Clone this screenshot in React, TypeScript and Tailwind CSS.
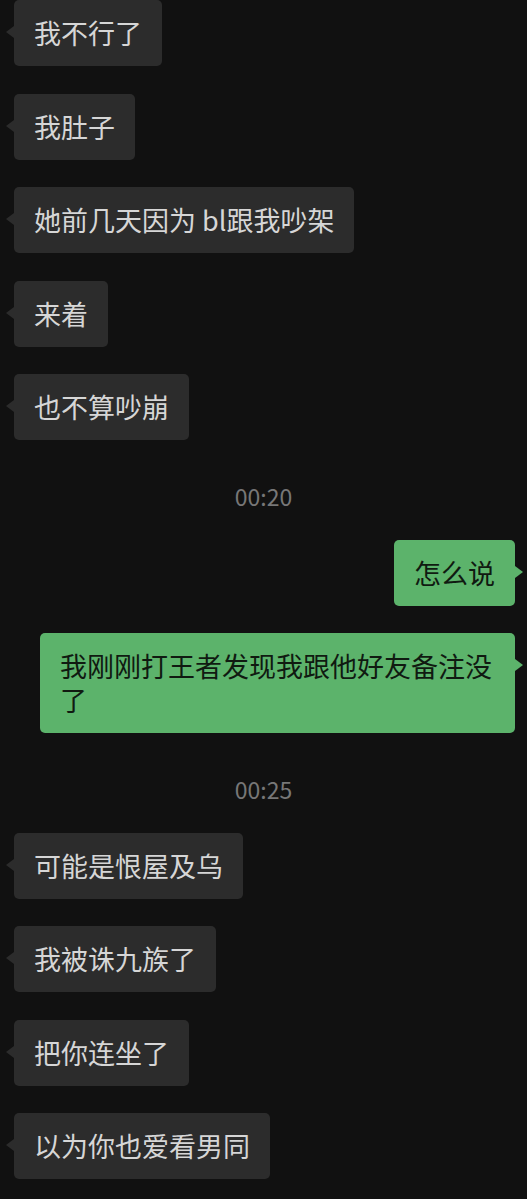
import React from "react";

type Msg =
  | { kind: "time"; text: string }
  | { kind: "in" | "out"; text: string };

const messages: Msg[] = [
  { kind: "in", text: "我不行了" },
  { kind: "in", text: "我肚子" },
  { kind: "in", text: "她前几天因为 bl跟我吵架" },
  { kind: "in", text: "来着" },
  { kind: "in", text: "也不算吵崩" },
  { kind: "time", text: "00:20" },
  { kind: "out", text: "怎么说" },
  { kind: "out", text: "我刚刚打王者发现我跟他好友备注没了" },
  { kind: "time", text: "00:25" },
  { kind: "in", text: "可能是恨屋及乌" },
  { kind: "in", text: "我被诛九族了" },
  { kind: "in", text: "把你连坐了" },
  { kind: "in", text: "以为你也爱看男同" },
];

const Bubble: React.FC<{ text: string; mine: boolean }> = ({ text, mine }) => (
  <div className={mine ? "flex justify-end pr-[12px]" : "flex justify-start pl-[14px]"}>
    <div
      className={
        mine
          ? "relative max-w-[475px] rounded-[5px] bg-[#5cb36b] px-[20px] py-[16px] text-[27px] leading-[34px] text-[#101a11]"
          : "relative max-w-[475px] rounded-[5px] bg-[#2c2c2c] px-[20px] py-[16px] text-[27px] leading-[34px] text-[#d6d6d6]"
      }
    >
      {/* tail */}
      {mine ? (
        <span className="absolute right-[-8px] top-[26px] h-0 w-0 border-y-[6px] border-l-[8px] border-y-transparent border-l-[#5cb36b]" />
      ) : (
        <span className="absolute left-[-8px] top-[26px] h-0 w-0 border-y-[6px] border-r-[8px] border-y-transparent border-r-[#2c2c2c]" />
      )}
      {text}
    </div>
  </div>
);

export default function App() {
  return (
    <div
      className="min-h-screen w-full bg-[#111111] pb-[19px]"
      style={{ fontFamily: '"Noto Sans CJK SC", "Noto Sans", sans-serif' }}
    >
      <div className="flex flex-col">
        {messages.map((m, i) => {
          const prev = messages[i - 1];
          if (m.kind === "time") {
            return (
              <div key={i} className="mt-[43.5px] mb-[32px] text-center text-[23px] leading-[24px] text-[#777777]">
                {m.text}
              </div>
            );
          }
          const mt = i === 0 || (prev && prev.kind === "time") ? "" : "mt-[27.5px]";
          return (
            <div key={i} className={mt}>
              <Bubble text={m.text} mine={m.kind === "out"} />
            </div>
          );
        })}
      </div>
    </div>
  );
}
